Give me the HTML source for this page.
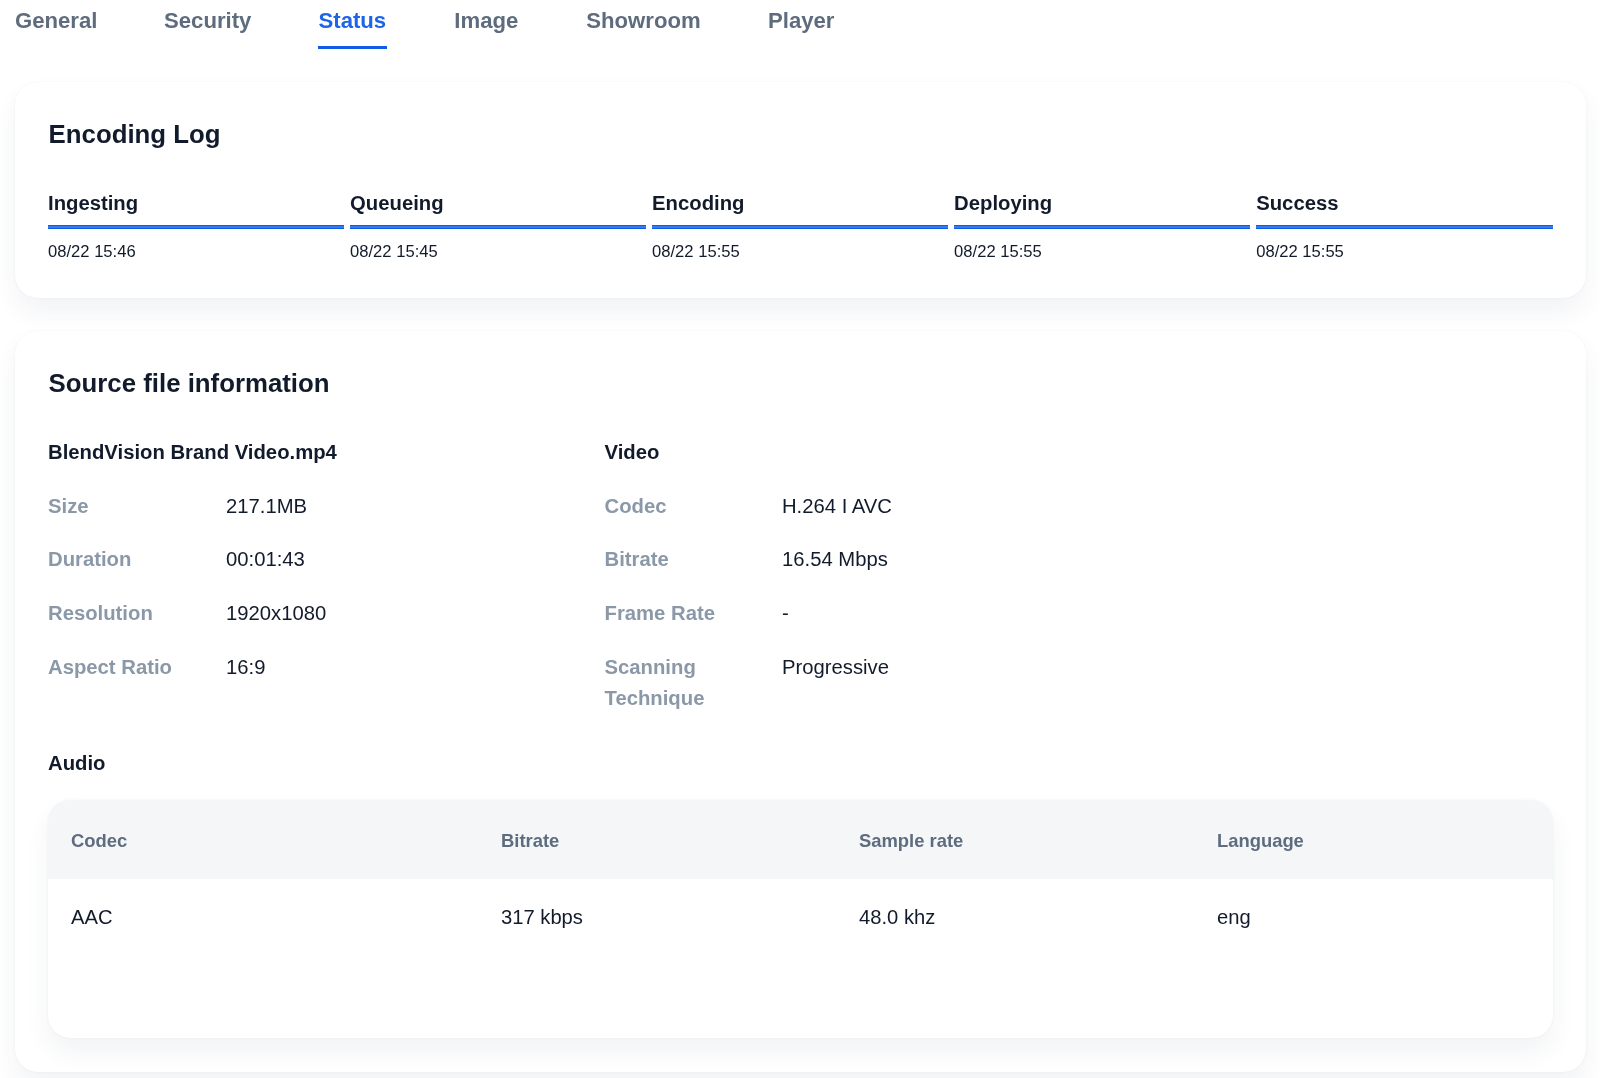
<!DOCTYPE html>
<html lang="en">
<head>
<meta charset="utf-8">
<title>Status</title>
<style>
*{box-sizing:border-box;margin:0;padding:0}
html,body{width:1600px;height:1078px;overflow:hidden;background:#fff}
body{font-family:"Liberation Sans",Arial,Helvetica,sans-serif;color:#0f172a;position:relative}
#root{position:absolute;left:0;top:0;width:1600px;height:1078px;overflow:hidden;will-change:transform;-webkit-font-smoothing:antialiased}
.tab{position:absolute;top:7.6px;font-size:22.15px;font-weight:700;line-height:26px;color:#5e6c7e;white-space:nowrap}
.tab.on{color:#1d65e8}
.tab.on:after{content:"";position:absolute;left:-.3px;right:-1px;top:38.5px;height:2.6px;background:#0d5de8}
.card{position:absolute;left:15px;width:1571px;background:#fff;border-radius:23px;box-shadow:0 0 2px rgba(40,58,90,.08),0 14px 26px rgba(40,58,90,.06)}
.h2{position:absolute;left:33.6px;font-size:25.8px;font-weight:700;line-height:32px;color:#121b2b;white-space:nowrap}
.step{position:absolute;top:108px;width:296.05px}
.step b{display:block;font-size:20.3px;line-height:26px;font-weight:700;color:#121b2b}
.step i{display:block;height:4px;background:linear-gradient(#0a60e8 0,#0a60e8 1px,#3b78ec 1px,#3b78ec 3px,#0a60e8 3px);margin-top:9px;box-shadow:0 0 .6px rgba(10,96,232,.6)}
.step span{display:block;font-size:16.6px;line-height:20px;margin-top:13.4px;color:#121b2b}
.h3{position:absolute;font-size:20.3px;font-weight:700;line-height:27px;color:#121b2b;white-space:nowrap}
.lbl{position:absolute;font-size:20.3px;font-weight:700;line-height:31px;color:#8a98a8;width:170px}
.val{position:absolute;font-size:20.25px;line-height:31px;color:#121b2b;white-space:nowrap}
.tbl{position:absolute;left:33px;top:469.4px;width:1505px;height:238px;border-radius:22.5px;background:#fff;box-shadow:0 0 2px rgba(40,58,90,.08),0 14px 26px rgba(40,58,90,.06);overflow:hidden}
.thead{position:absolute;left:0;top:0;width:100%;height:78.5px;background:#f4f6f8}
.th{position:absolute;top:30.1px;font-size:18.4px;font-weight:700;line-height:22px;color:#5d6c7e;white-space:nowrap}
.td{position:absolute;top:103.5px;font-size:20.2px;line-height:26px;color:#121b2b;white-space:nowrap}
</style>
</head>
<body>
<div id="root">
<div class="tab" style="left:15px">General</div>
<div class="tab" style="left:164px">Security</div>
<div class="tab on" style="left:318.5px">Status</div>
<div class="tab" style="left:454.3px">Image</div>
<div class="tab" style="left:586.3px">Showroom</div>
<div class="tab" style="left:768px">Player</div>

<div class="card" style="top:82px;height:216px">
  <div class="h2" style="top:35.8px">Encoding Log</div>
  <div class="step" style="left:33px"><b>Ingesting</b><i></i><span>08/22 15:46</span></div>
  <div class="step" style="left:335.05px"><b>Queueing</b><i></i><span>08/22 15:45</span></div>
  <div class="step" style="left:637.05px"><b>Encoding</b><i></i><span>08/22 15:55</span></div>
  <div class="step" style="left:939.1px"><b>Deploying</b><i></i><span>08/22 15:55</span></div>
  <div class="step" style="left:1241.2px;width:296.5px"><b>Success</b><i></i><span>08/22 15:55</span></div>
</div>

<div class="card" style="top:331px;height:741px">
  <div class="h2" style="top:35.8px">Source file information</div>

  <div class="h3" style="left:33px;top:108px">BlendVision Brand Video.mp4</div>
  <div class="lbl" style="left:33px;top:159.7px">Size</div><div class="val" style="left:211px;top:159.7px">217.1MB</div>
  <div class="lbl" style="left:33px;top:213.4px">Duration</div><div class="val" style="left:211px;top:213.4px">00:01:43</div>
  <div class="lbl" style="left:33px;top:267.1px">Resolution</div><div class="val" style="left:211px;top:267.1px">1920x1080</div>
  <div class="lbl" style="left:33px;top:320.8px">Aspect Ratio</div><div class="val" style="left:211px;top:320.8px">16:9</div>

  <div class="h3" style="left:589.5px;top:108px">Video</div>
  <div class="lbl" style="left:589.5px;top:159.7px">Codec</div><div class="val" style="left:767px;top:159.7px">H.264 I AVC</div>
  <div class="lbl" style="left:589.5px;top:213.4px">Bitrate</div><div class="val" style="left:767px;top:213.4px">16.54 Mbps</div>
  <div class="lbl" style="left:589.5px;top:267.1px">Frame Rate</div><div class="val" style="left:767px;top:267.1px">-</div>
  <div class="lbl" style="left:589.5px;top:320.8px">Scanning Technique</div><div class="val" style="left:767px;top:320.8px">Progressive</div>

  <div class="h3" style="left:33px;top:419px">Audio</div>

  <div class="tbl">
    <div class="thead"></div>
    <div class="th" style="left:23px">Codec</div>
    <div class="th" style="left:453px">Bitrate</div>
    <div class="th" style="left:811px">Sample rate</div>
    <div class="th" style="left:1169px">Language</div>
    <div class="td" style="left:23px">AAC</div>
    <div class="td" style="left:453px">317 kbps</div>
    <div class="td" style="left:811px">48.0 khz</div>
    <div class="td" style="left:1169px">eng</div>
  </div>
</div>
</div>
</body>
</html>
